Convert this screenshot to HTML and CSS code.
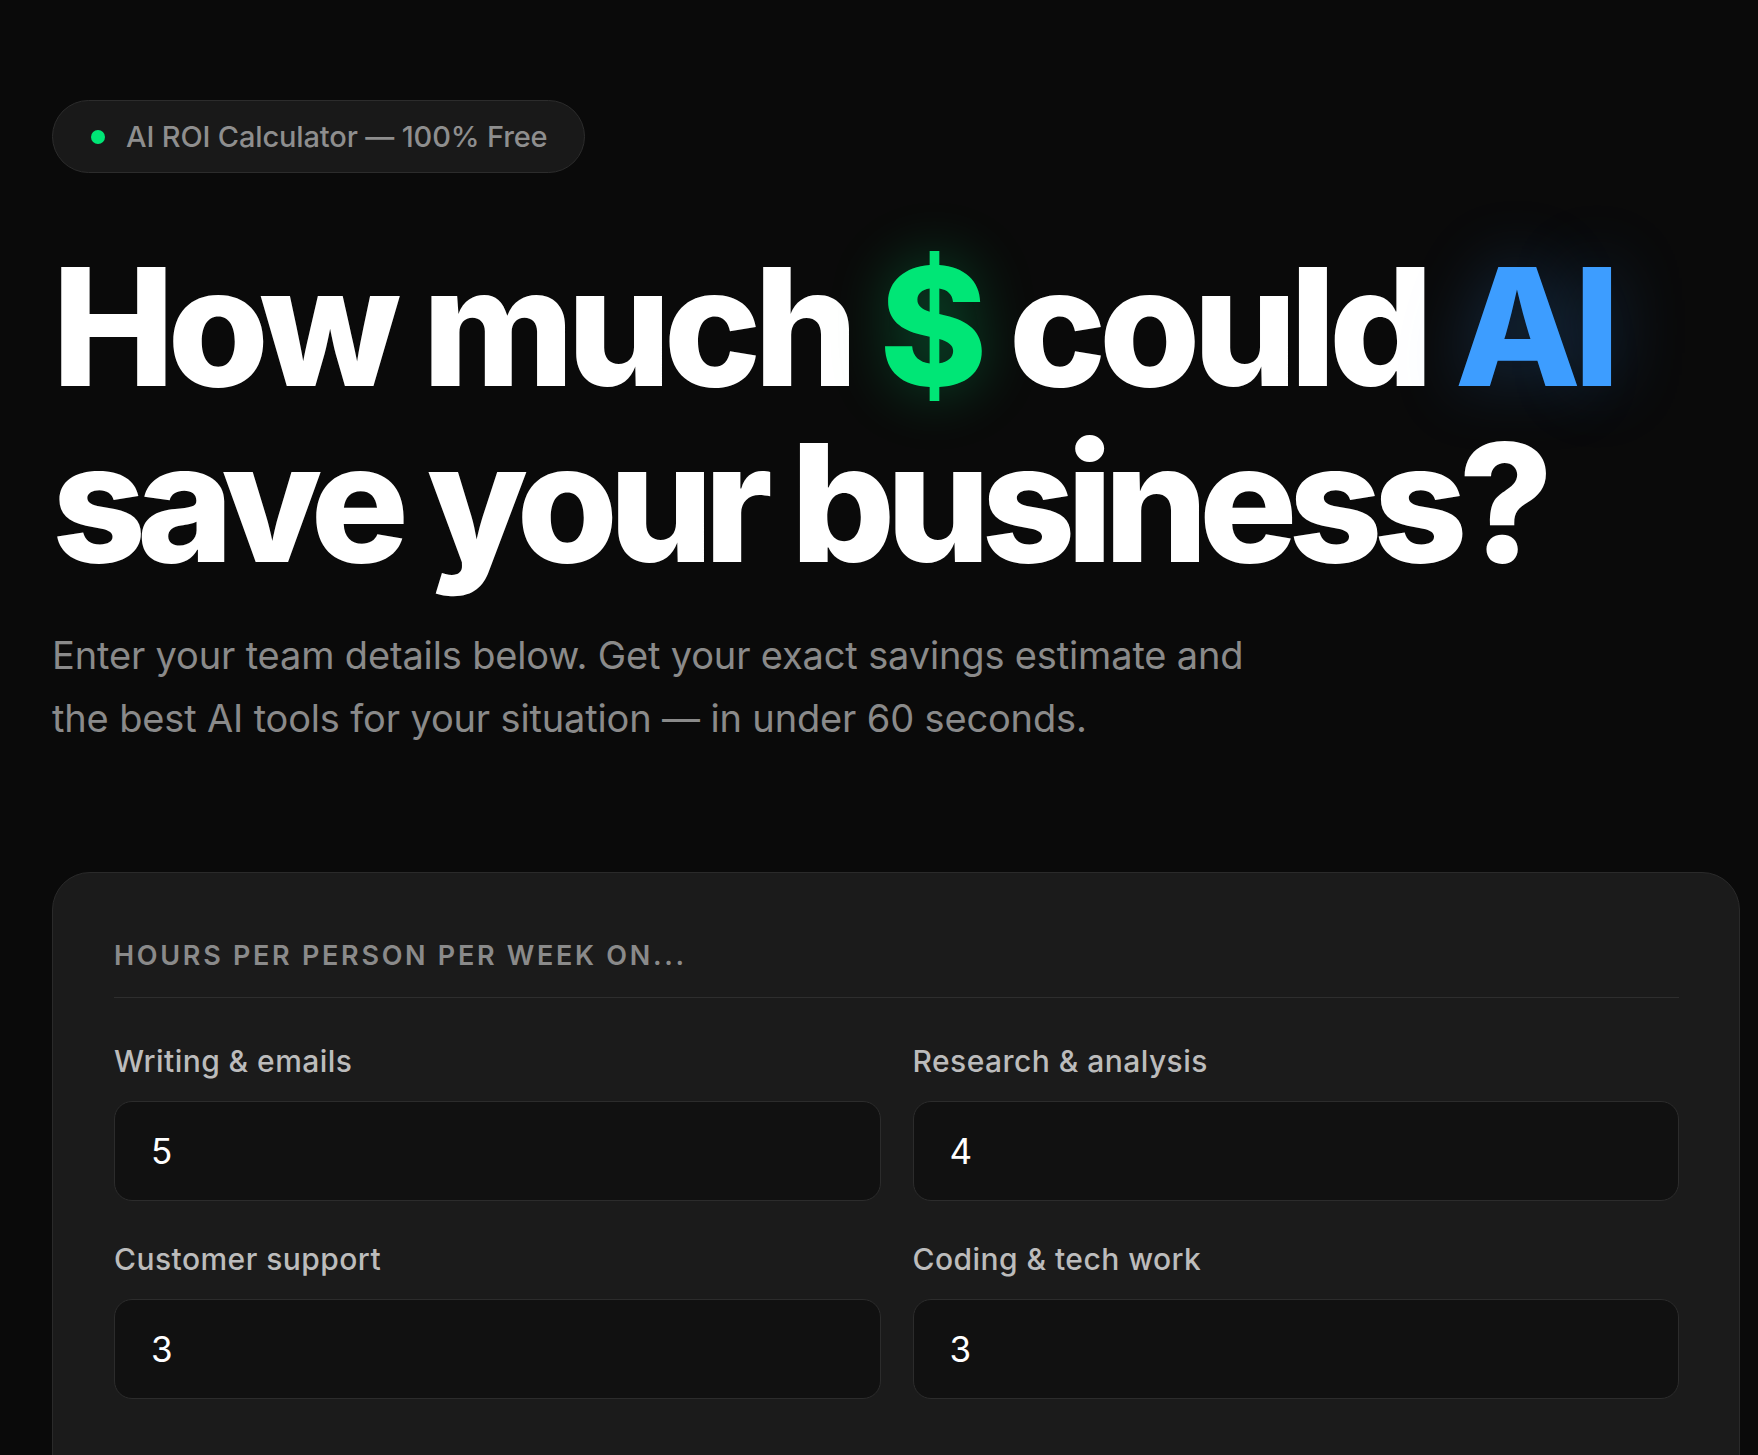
FILE: index.html
```html
<!DOCTYPE html>
<html lang="en">
<head>
<meta charset="utf-8">
<title>AI ROI Calculator</title>
<link rel="stylesheet" href="styles.css">
</head>
<body>
<main class="page">
  <div class="badge"><span class="badge-dot"></span><span class="badge-text">AI ROI Calculator — 100% Free</span></div>
  <h1 class="title">How much <span class="money">$</span> could <span class="ai">AI</span><br><span class="title-tight">save your business?</span></h1>
  <p class="lead">Enter your team details below. Get your exact savings estimate and<br>the best AI tools for your situation — in under 60 seconds.</p>
  <section class="card">
    <h2 class="card-head">Hours per person per week on...</h2>
    <div class="fields">
      <label class="field"><span class="field-label">Writing &amp; emails</span><input class="field-input" type="text" value="5"></label>
      <label class="field"><span class="field-label">Research &amp; analysis</span><input class="field-input" type="text" value="4"></label>
      <label class="field"><span class="field-label">Customer support</span><input class="field-input" type="text" value="3"></label>
      <label class="field"><span class="field-label">Coding &amp; tech work</span><input class="field-input" type="text" value="3"></label>
    </div>
  </section>
</main>
</body>
</html>
```

FILE: styles.css
```css
* { box-sizing: border-box; }
html, body { margin: 0; padding: 0; }
body {
  background: #0a0a0a;
  color: #ffffff;
  font-family: "Inter", "Noto Sans", sans-serif;
  overflow: hidden;
  height: 1455px;
}
.page {
  padding: 100px 18px 0 52px;
}
.badge {
  display: inline-flex;
  align-items: center;
  gap: 21px;
  height: 73px;
  padding: 0 36px 0 38px;
  border: 1px solid #2c2c2c;
  border-radius: 40px;
  background: #191919;
}
.badge-dot {
  width: 14px;
  height: 14px;
  border-radius: 50%;
  background: #00e676;
}
.badge-text {
  font-size: 29px;
  font-weight: 500;
  letter-spacing: -0.005em;
  color: #8e8e8e;
}
.title {
  margin: 66px 0 0 0;
  font-size: 164px;
  line-height: 176px;
  font-weight: 800;
  letter-spacing: -0.045em;
  color: #ffffff;
}
.title-tight {
  letter-spacing: -0.055em;
}
.money {
  color: #00e676;
  text-shadow: 0 0 60px rgba(0, 230, 118, 0.3);
}
.ai {
  color: #3d9dff;
  text-shadow: 0 0 70px rgba(61, 157, 255, 0.25);
}
.lead {
  margin: 33px 0 0 0;
  font-size: 38px;
  line-height: 63.4px;
  font-weight: 400;
  letter-spacing: -0.004em;
  color: #8a8a8a;
}
.card {
  margin-top: 121px;
  border: 1px solid #2a2a2a;
  border-radius: 38px;
  background: #1b1b1b;
  padding: 67px 60px 80px 61px;
  height: 700px;
}
.card-head {
  margin: 0;
  padding-bottom: 26px;
  border-bottom: 1px solid #2e2e2e;
  font-size: 27px;
  line-height: 31px;
  font-weight: 600;
  text-transform: uppercase;
  letter-spacing: 0.1em;
  color: #8a8a8a;
}
.fields {
  display: grid;
  grid-template-columns: 1fr 1fr;
  column-gap: 32px;
  row-gap: 41px;
  margin-top: 46px;
}
.field {
  display: flex;
  flex-direction: column;
  gap: 23px;
}
.field-label {
  font-size: 30px;
  line-height: 34px;
  font-weight: 500;
  letter-spacing: 0.015em;
  color: #bcbcbc;
}
.field-input {
  height: 100px;
  width: 100%;
  padding: 0 36px;
  border: 1px solid #2c2c2c;
  border-radius: 18px;
  background: #111111;
  color: #ffffff;
  font-family: "Inter", "Noto Sans", sans-serif;
  font-size: 35px;
  outline: none;
}
```
